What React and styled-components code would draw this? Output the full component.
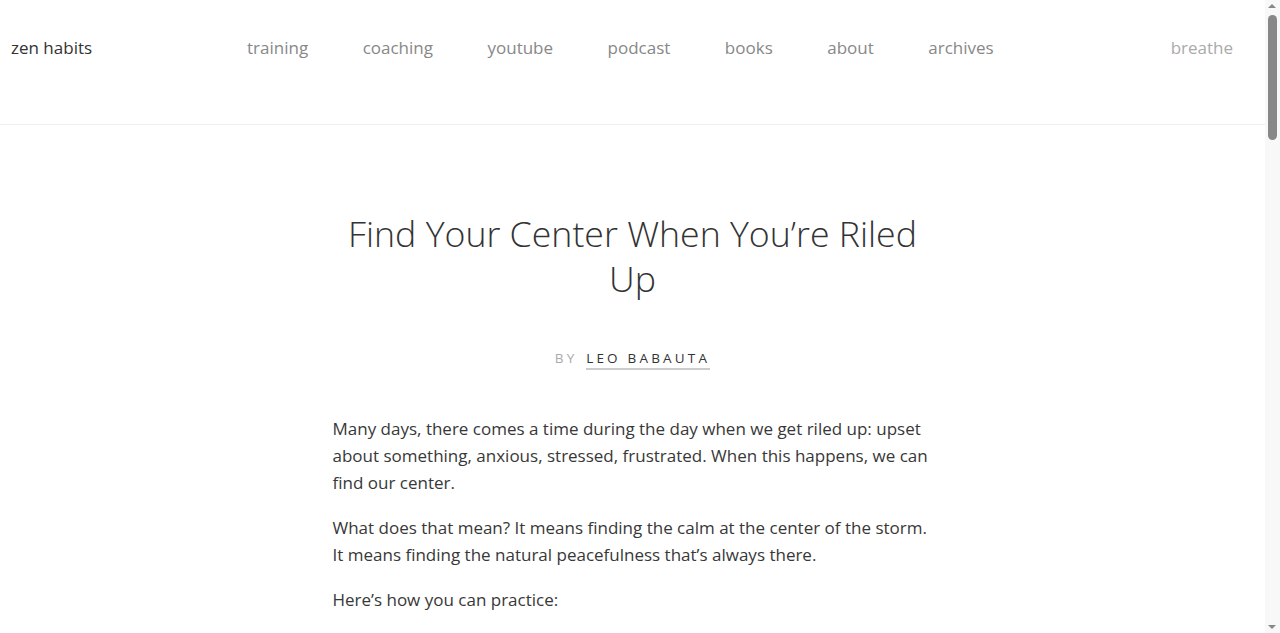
import React from 'react';
import styled, { createGlobalStyle } from 'styled-components';

const GlobalStyle = createGlobalStyle`
  html, body {
    margin: 0;
    padding: 0;
    background: #fff;
  }
  body {
    font-family: 'Open Sans', 'Lato', sans-serif;
    color: #333;
  }
`;

const Page = styled.div`
  margin-right: 15px;
`;

const Header = styled.header`
  display: flex;
  align-items: center;
  height: 125px;
  box-sizing: border-box;
  padding: 0 32px 30px 11px;
  border-bottom: 1px solid #eee;
`;

const Logo = styled.a`
  width: 236px;
  font-size: 17px;
  color: #333;
  text-decoration: none;
`;

const Nav = styled.nav`
  display: flex;
  gap: 54.5px;
`;

const NavLink = styled.a`
  font-size: 17px;
  color: ${(p) => (p.$faint ? '#aaa' : '#888')};
  text-decoration: none;
  margin-left: ${(p) => (p.$push ? 'auto' : '0')};
`;

const Article = styled.article`
  max-width: 600px;
  margin: 0 auto;
  padding: 86px 0 0;
`;

const Title = styled.h1`
  margin: 0;
  font-size: 35.7px;
  font-weight: 300;
  line-height: 45px;
  text-align: center;
  color: #333;
`;

const Byline = styled.div`
  margin-top: 48px;
  text-align: center;
  font-size: 13.5px;
  letter-spacing: 3.2px;
  text-transform: uppercase;
  color: #aaa;
`;

const Author = styled.a`
  color: #333;
  text-decoration: none;
  border-bottom: 2px solid #ccc;
  padding-bottom: 1px;
  margin-left: 2px;
`;

const Body = styled.div`
  margin-top: 48px;
`;

const Para = styled.p`
  margin: 0 0 18px;
  font-size: 17px;
  line-height: 27px;
  color: #383838;
`;

const Scrollbar = styled.div`
  position: fixed;
  top: 0;
  right: 0;
  width: 15px;
  height: 100vh;
  background: #f8f8f8;
`;

const Thumb = styled.div`
  position: absolute;
  top: 15px;
  left: 3px;
  width: 9px;
  height: 125px;
  border-radius: 5px;
  background: #888;
`;

const Arrow = styled.div`
  position: absolute;
  left: 3px;
  width: 0;
  height: 0;
  border-left: 4.5px solid transparent;
  border-right: 4.5px solid transparent;
  ${(p) =>
    p.$down
      ? 'bottom: 4px; border-top: 4px solid #888;'
      : 'top: 4px; border-bottom: 4px solid #888;'}
`;

const paragraphs = [
  'Many days, there comes a time during the day when we get riled up: upset about something, anxious, stressed, frustrated. When this happens, we can find our center.',
  'What does that mean? It means finding the calm at the center of the storm. It means finding the natural peacefulness that’s always there.',
  'Here’s how you can practice:',
];

const navItems = ['training', 'coaching', 'youtube', 'podcast', 'books', 'about', 'archives'];

const App = () => (
  <>
    <GlobalStyle />
    <Page>
      <Header>
        <Logo href="#">zen habits</Logo>
        <Nav>
          {navItems.map((item) => (
            <NavLink key={item} href="#">
              {item}
            </NavLink>
          ))}
        </Nav>
        <NavLink href="#" $faint $push>
          breathe
        </NavLink>
      </Header>
      <Article>
        <Title>Find Your Center When You’re Riled Up</Title>
        <Byline>
          By <Author href="#">Leo Babauta</Author>
        </Byline>
        <Body>
          {paragraphs.map((text) => (
            <Para key={text.slice(0, 20)}>{text}</Para>
          ))}
        </Body>
      </Article>
    </Page>
    <Scrollbar>
      <Arrow />
      <Thumb />
      <Arrow $down />
    </Scrollbar>
  </>
);

export default App;
